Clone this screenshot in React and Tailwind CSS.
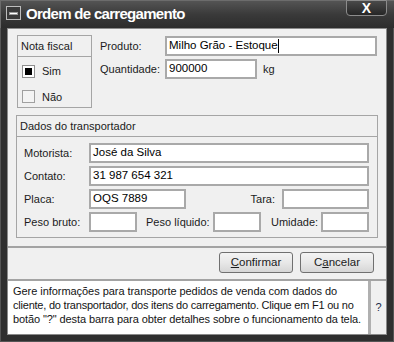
export default function App() {
  const input = "h-[20px] bg-white border-2 border-[#a9a9a9] px-[2px] flex items-center text-[11.5px] text-black";

  return (
    <div className="w-[394px] h-[342px] flex flex-col bg-[#2f2f2f] font-['Liberation_Sans',Arial,sans-serif] text-[11px] text-[#1b1b1b] overflow-hidden">
      {/* Title bar */}
      <div className="h-[28px] shrink-0 flex items-start bg-gradient-to-b from-[#545454] via-[#3a3a3a] to-[#2c2c2c] border-t border-l border-[#6c6c6c]">
        <div className="mt-[5px] ml-[5px] w-[15px] h-[14px] border border-[#bdbdbd] bg-[#3a3a3a] flex items-center justify-center">
          <div className="w-[9px] h-[3px] bg-white border border-[#9a9a9a]"></div>
        </div>
        <span className="ml-[5px] mt-[3px] text-white font-bold text-[15px] tracking-[-0.7px] leading-[20px]">
          Ordem de carregamento
        </span>
        <button className="ml-auto mr-[7px] w-[41px] h-[16px] -mt-px rounded-b-[4px] border border-[#8c8c8c] bg-gradient-to-b from-[#4a4a4a] to-[#262626] flex items-center justify-center text-white font-bold text-[14px] leading-none">
          X
        </button>
      </div>

      {/* Frame */}
      <div className="flex-1 flex flex-col px-[6px] pb-[6px] border-l border-r border-b border-[#555]">
        <div className="flex-1 flex flex-col bg-[#f0f0f0] border border-[#8a8a8a]">
          {/* Top section */}
          <div className="flex pt-[6px] pl-[9px]">
            <div className="w-[75px] h-[73px] border border-[#a5a5a5] flex flex-col">
              <div className="h-[21px] border-b border-[#a5a5a5] pl-[3px] flex items-center">Nota fiscal</div>
              <div className="flex items-center mt-[6px] ml-[4px] gap-[7px]">
                <div className="w-[13px] h-[13px] border border-[#8f8f8f] bg-white flex items-center justify-center">
                  <div className="w-[7px] h-[7px] bg-black"></div>
                </div>
                <span>Sim</span>
              </div>
              <div className="flex items-center mt-[9px] ml-[4px] gap-[7px]">
                <div className="w-[13px] h-[13px] border border-[#a0a0a0] bg-[#f4f4f4]"></div>
                <span>Não</span>
              </div>
            </div>
            <div className="ml-[8px] flex flex-col gap-[3px] pt-[1px]">
              <div className="flex items-center">
                <span className="w-[65px]">Produto:</span>
                <div className={`${input} w-[212px]`}>
                  Milho Grão - Estoque<span className="w-px h-[14px] bg-black"></span>
                </div>
              </div>
              <div className="flex items-center">
                <span className="w-[65px]">Quantidade:</span>
                <div className={`${input} w-[92px]`}>900000</div>
                <span className="ml-[6px]">kg</span>
              </div>
            </div>
          </div>

          {/* Dados do transportador */}
          <div className="mt-[7px] ml-[8px] w-[362px] border border-[#a5a5a5] flex flex-col">
            <div className="h-[21px] border-b border-[#a5a5a5] pl-[3px] flex items-center">Dados do transportador</div>
            <div className="flex flex-col gap-[3px] pt-[6px] pb-[5px] pl-[7px]">
              <div className="flex items-center">
                <span className="w-[65px]">Motorista:</span>
                <div className={`${input} w-[280px]`}>José da Silva</div>
              </div>
              <div className="flex items-center">
                <span className="w-[65px]">Contato:</span>
                <div className={`${input} w-[280px]`}>31 987 654 321</div>
              </div>
              <div className="flex items-center">
                <span className="w-[65px]">Placa:</span>
                <div className={`${input} w-[97px]`}>OQS 7889</div>
                <span className="ml-auto mr-[7px]">Tara:</span>
                <div className={`${input} w-[87px] mr-[8px]`}></div>
              </div>
              <div className="flex items-center">
                <span className="w-[65px]">Peso bruto:</span>
                <div className={`${input} w-[48px]`}></div>
                <span className="ml-[9px] w-[67px]">Peso líquido:</span>
                <div className={`${input} w-[48px]`}></div>
                <span className="ml-[10px] w-[50px]">Umidade:</span>
                <div className={`${input} w-[48px]`}></div>
              </div>
            </div>
          </div>

          {/* Separator */}
          <div className="mt-[8px] h-[2px] bg-[#a3a3a3]"></div>

          {/* Buttons */}
          <div className="flex justify-end gap-[7px] pr-[12px] mt-[4px]">
            <button className="w-[74px] h-[21px] rounded-[3px] border border-[#707070] bg-gradient-to-b from-[#f4f4f4] via-[#e8e8e8] to-[#d6d6d6] text-[11.5px] text-[#1b1b1b]">
              <span className="underline">C</span>onfirmar
            </button>
            <button className="w-[74px] h-[21px] rounded-[3px] border border-[#707070] bg-gradient-to-b from-[#f4f4f4] via-[#e8e8e8] to-[#d6d6d6] text-[11.5px] text-[#1b1b1b]">
              C<span className="underline">a</span>ncelar
            </button>
          </div>

          {/* Help bar */}
          <div className="mt-[6px] flex-1 flex border-t-2 border-[#a3a3a3]">
            <div className="flex-1 min-w-0 overflow-hidden bg-white pl-[5px] pt-[3px] text-[11px] leading-[14px] text-[#141414] whitespace-nowrap">
              <div className="tracking-[-0.05px]">Gere informações para transporte pedidos de venda com dados do</div>
              <div className="tracking-[-0.22px]">cliente, do transportador, dos itens do carregamento. Clique em F1 ou no</div>
              <div className="tracking-[-0.1px]">botão "?" desta barra para obter detalhes sobre o funcionamento da tela.</div>
            </div>
            <div className="w-[3px] bg-[#b0b0b0]"></div>
            <div className="w-[15px] flex items-center justify-center text-[#1b2a4a]">?</div>
          </div>
        </div>
      </div>
    </div>
  );
}
